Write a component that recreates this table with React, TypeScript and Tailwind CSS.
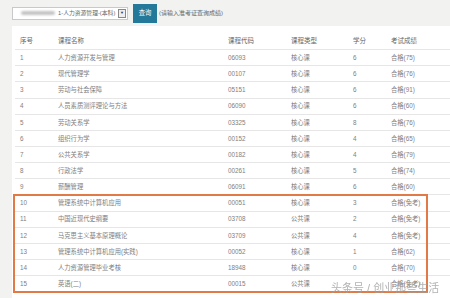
const HEAD = ["序号", "课程名称", "课程代码", "课程类型", "学分", "考试成绩"];

const ROWS = [
  ["1", "人力资源开发与管理", "06093", "核心课", "6", "合格(75)"],
  ["2", "现代管理学", "00107", "核心课", "6", "合格(76)"],
  ["3", "劳动与社会保障", "05151", "核心课", "6", "合格(91)"],
  ["4", "人员素质测评理论与方法", "06090", "核心课", "6", "合格(60)"],
  ["5", "劳动关系学", "03325", "核心课", "8", "合格(76)"],
  ["6", "组织行为学", "00152", "核心课", "4", "合格(65)"],
  ["7", "公共关系学", "00182", "核心课", "4", "合格(79)"],
  ["8", "行政法学", "00261", "核心课", "5", "合格(74)"],
  ["9", "薪酬管理", "06091", "核心课", "6", "合格(60)"],
  ["10", "管理系统中计算机应用", "00051", "核心课", "3", "合格(免考)"],
  ["11", "中国近现代史纲要", "03708", "公共课", "2", "合格(免考)"],
  ["12", "马克思主义基本原理概论", "03709", "公共课", "4", "合格(免考)"],
  ["13", "管理系统中计算机应用(实践)", "00052", "核心课", "1", "合格(62)"],
  ["14", "人力资源管理毕业考核", "18948", "核心课", "0", "合格(70)"],
  ["15", "英语(二)", "00015", "公共课", "", "合格(免考)"],
];

const GRID = "grid grid-cols-[43px_170px_63px_62px_38px_1fr] items-center h-[16.15px]";

export default function App() {
  return (
    <div
      className="relative w-[450px] h-[298px] overflow-hidden bg-[#f2f3f1] text-[#808080]"
      style={{ fontFamily: '"Liberation Sans", "Noto Sans CJK SC", sans-serif' }}
    >
      {/* Query bar */}
      <div className="flex items-center h-[26px] pl-[12px]">
        <div className="flex items-center w-[116px] h-[13px] border border-[#c9c9c9] bg-white overflow-hidden">
          <span className="ml-[8px] w-[34px] h-[4px] rounded-sm bg-[#c4c4c4] blur-[1px]" />
          <span className="ml-[3px] text-[5.8px] text-[#666] whitespace-nowrap">1-人力资源管理-(本科)</span>
          <span className="ml-auto mr-[1px] flex items-center justify-center w-[8px] h-[9px] border border-[#888] bg-[#eee] text-[4px] text-[#333]">
            ▼
          </span>
        </div>
        <div className="ml-[5px] flex items-center justify-center w-[24px] h-[19px] bg-[#24799a] text-white text-[6.3px]">
          查询
        </div>
        <span className="ml-[2px] text-[6px] text-[#666] whitespace-nowrap">(请输入准考证查询成绩)</span>
      </div>

      {/* Table panel */}
      <div className="ml-[12px] bg-white h-[272px] pt-[7px] pl-[3px]">
        <div className={`${GRID} text-[6.5px] text-[#666]`}>
          {HEAD.map((h, i) => (
            <div key={h} className={i === 0 ? "pl-[5px]" : ""}>
              {h}
            </div>
          ))}
        </div>
        {ROWS.map((r) => (
          <div key={r[0]} className={`${GRID} border-t border-[#e6e6e6] text-[6.3px]`}>
            {r.map((c, i) => (
              <div key={i} className={`whitespace-nowrap ${i === 0 ? "pl-[5px]" : ""}`}>
                {c}
              </div>
            ))}
          </div>
        ))}
      </div>

      {/* highlight annotation */}
      <div className="absolute left-[13px] top-[194px] w-[415px] h-[99px] border-2 border-[#e27a45]" />

      {/* watermark */}
      <div className="absolute left-[331px] top-[280px] text-[11px] text-[#a0a0a0] opacity-80 whitespace-nowrap">
        头条号 / 创业那些生活
      </div>
    </div>
  );
}
